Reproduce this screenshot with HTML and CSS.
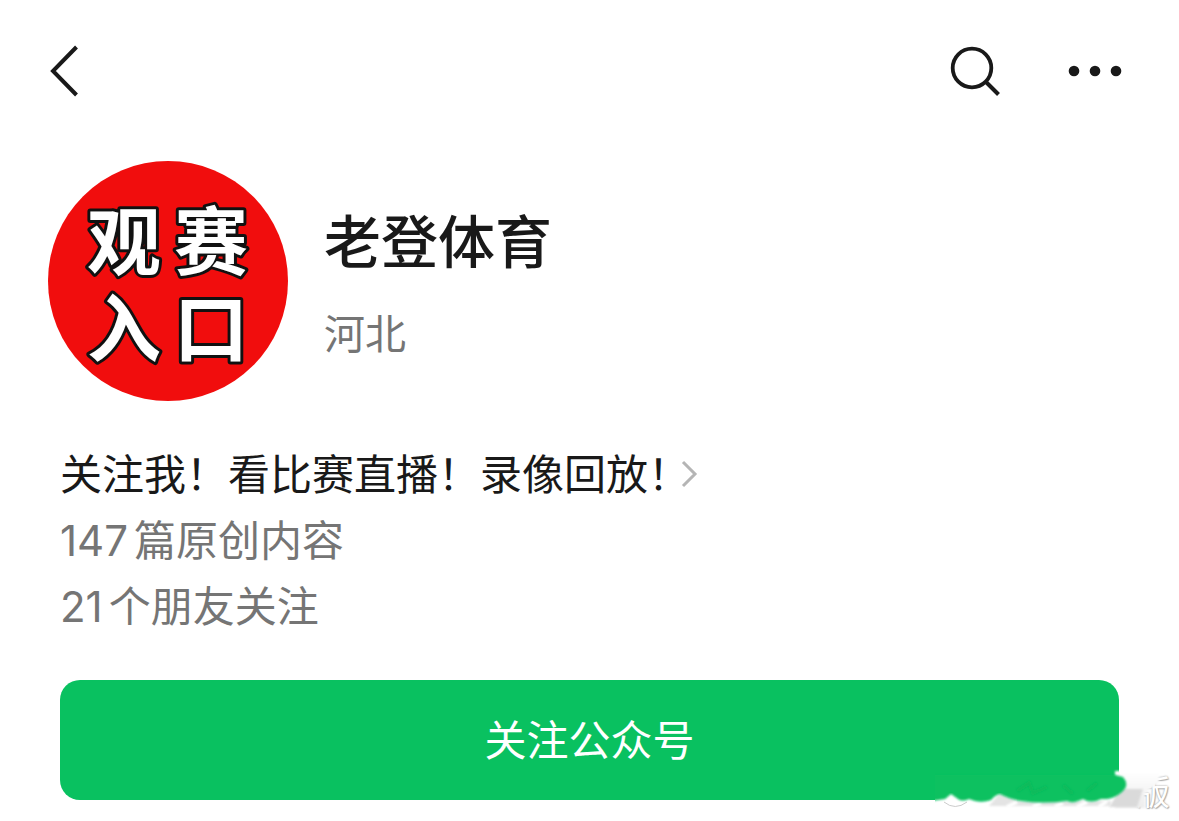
FILE: index.html
```
<!DOCTYPE html>
<html lang="zh-CN">
<head>
    <meta charset="UTF-8">
    <meta name="viewport" content="width=device-width, initial-scale=1.0">
    <title>老登体育</title>
    <link rel="stylesheet" href="styles.css">
</head>
<body>
    <header class="topbar">
        <button class="icon-button" type="button" aria-label="返回">
            <svg width="32" height="56" viewBox="0 0 32 56">
                <path d="M28.500 4L5 28L28.500 52" fill="none" stroke="#191919" stroke-width="4"/>
            </svg>
        </button>
        <div class="actions">
            <button class="icon-button" type="button" aria-label="搜索">
                <svg width="56" height="56" viewBox="0 0 56 56">
                    <circle cx="26" cy="25" r="19.300" fill="none" stroke="#191919" stroke-width="3.800"/>
                    <path d="M39.500 38.500L52.500 51.500" fill="none" stroke="#191919" stroke-width="4"/>
                </svg>
            </button>
            <button class="icon-button" type="button" aria-label="更多">
                <svg width="56" height="56" viewBox="0 0 56 56" fill="#191919">
                    <circle cx="8" cy="28" r="5.300"/>
                    <circle cx="29" cy="28" r="5.300"/>
                    <circle cx="50" cy="28" r="5.300"/>
                </svg>
            </button>
        </div>
    </header>

    <main>
        <section class="profile">
            <svg class="avatar" width="240" height="240" viewBox="0 0 240 240">
                <circle cx="120" cy="120" r="120" fill="#f10d0d"/>
                <text x="76" y="108">观</text>
                <text x="163" y="108">赛</text>
                <text x="76" y="195">入</text>
                <text x="163" y="195">口</text>
            </svg>
            <div>
                <h1 class="name">老登体育</h1>
                <p class="region">河北</p>
            </div>
        </section>

        <section class="details">
            <a class="intro" href="#">
                关注我！看比赛直播！录像回放！
                <svg class="chevron" width="18" height="28" viewBox="0 0 18 28">
                    <path d="M3 2L15 14L3 26" fill="none" stroke="#b5b5b5" stroke-width="3"/>
                </svg>
            </a>
            <p class="stat"><span class="number">147</span>篇原创内容</p>
            <p class="stat"><span class="number">21</span>个朋友关注</p>
        </section>

        <div class="follow">
            <button class="follow-button" type="button">关注公众号</button>
        </div>
    </main>

    <!-- smudged watermark over the corner of the button -->
    <div class="watermark">
        <span class="watermark-text">版</span>
        <svg class="smudge" width="250" height="60" viewBox="0 0 250 60">
            <defs>
                <filter id="soft" x="-10%" y="-30%" width="120%" height="160%">
                    <feGaussianBlur stdDeviation="1.200"/>
                </filter>
                <linearGradient id="fade" x1="0" y1="0" x2="0" y2="1">
                    <stop offset="0" stop-color="#ffffff"/>
                    <stop offset="1" stop-color="#ededed"/>
                </linearGradient>
                <clipPath id="edge">
                    <path d="M6 0H250V60H6Z"/>
                </clipPath>
            </defs>
            <g clip-path="url(#edge)">
                <path d="M6 28H196V43H6Z" fill="#ffffff"/>
                <path d="M186 6H230V18L216 28V43H186Z" fill="url(#fade)" filter="url(#soft)"/>
                <path d="M180 42L192 24H214L208 42Z" fill="#dadada" filter="url(#soft)"/>
                <path d="M60 41L71 28L90 36H182V41Z" fill="#e4e4e4" filter="url(#soft)"/>
                <path d="M15 37Q26 46 38 37" fill="none" stroke="#cccccc" stroke-width="1"/>
                <path d="M78 42L88 37M104 42L112 38M126 42L134 38M148 42L158 37M170 42L178 36" stroke="#ffffff" stroke-width="4" filter="url(#soft)"/>
                <path d="M-4 10H186L194 12Q201 20 193 27Q186 33 178 34L172 34Q162 39 154 34Q144 39 138 36Q114 39 92 36Q80 34 71 29Q66 30 62 35Q54 38 46 36L40 34Q33 37 29 34L22 29L16 34L-4 37Z" fill="#09c160" filter="url(#soft)"/>
                <path d="M88 26L100 18L104 28L118 22M134 20L144 29M158 26L168 18" fill="none" stroke="#08bb5c" stroke-width="4" filter="url(#soft)"/>
            </g>
        </svg>
    </div>
</body>
</html>
```
FILE: styles.css
```
* {
    box-sizing: border-box;
}
body {
    position: relative;
    margin: 0;
    background: #fff;
    color: #191919;
    font-family: "Noto Sans CJK SC", sans-serif;
    font-size: 42px;
    line-height: 66px;
}
h1, p {
    margin: 0;
}
button {
    border: 0;
    font-family: inherit;
    cursor: pointer;
}
.topbar {
    display: flex;
    justify-content: space-between;
    padding: 43px 57px 0 48px;
}
.actions {
    display: flex;
    gap: 64px;
}
.icon-button {
    display: flex;
    padding: 0;
    background: none;
}
.profile {
    display: flex;
    align-items: center;
    gap: 36px;
    padding: 62px 48px 0;
}
.avatar {
    flex: none;
}
.avatar text {
    fill: #fff;
    stroke: #111;
    stroke-width: 6px;
    stroke-linejoin: round;
    paint-order: stroke;
    font-size: 74px;
    font-weight: 700;
    text-anchor: middle;
}
.name {
    font-size: 57px;
    font-weight: 500;
    line-height: 80px;
}
.region {
    margin-top: 20px;
    color: #757575;
    font-size: 41px;
}
.details {
    padding: 38px 60px 0;
}
.intro {
    display: flex;
    align-items: center;
    color: inherit;
    text-decoration: none;
}
/* the full-width "！" leaves half a character of blank space */
.chevron {
    flex: none;
    margin: 4px 0 0 -10px;
}
.stat {
    color: #757575;
}
.number {
    margin-right: 6px;
    font-family: Inter, sans-serif;
    line-height: 1;
}
.follow {
    padding: 43px 60px 21px;
}
.follow-button {
    display: block;
    width: 100%;
    height: 120px;
    padding: 0 0 6px;
    border-radius: 20px;
    background: #09c160;
    color: #fff;
    font-size: 42px;
}
.watermark {
    position: absolute;
    right: 0;
    bottom: 6px;
    width: 250px;
    height: 50px;
    pointer-events: none;
}
.watermark-text {
    position: absolute;
    right: 9px;
    bottom: 4px;
    color: #fff;
    font-size: 34px;
    line-height: 40px;
    text-shadow: 0 0 2px #888, 1px 1px 1px #bbb;
}
.smudge {
    position: absolute;
    top: 0;
    left: 0;
}
```
